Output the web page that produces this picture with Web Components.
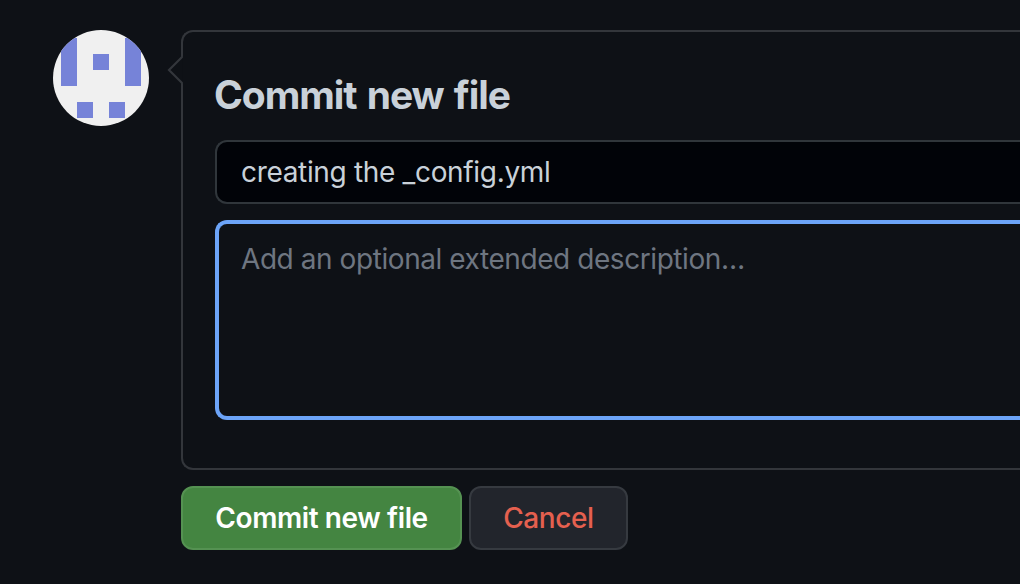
<!DOCTYPE html>
<html lang="en">
<head>
<meta charset="utf-8">
<title>Commit new file</title>
<style>
html,body{margin:0;height:100%;overflow:hidden;background:#0e1116}
body{font-family:Inter,"Liberation Sans",sans-serif;color:#c9d1d9}
</style>
</head>
<body>
<commit-form></commit-form>
<script>
const define = (name, html) => customElements.define(name, class extends HTMLElement {
  constructor() {
    super();
    this.attachShadow({mode: 'open'}).innerHTML = html;
  }
});

define('user-avatar', `<style>
:host{display:block;width:96px;height:96px;border-radius:50%;overflow:hidden;background:#f0f0f0;flex:none}
svg{display:block}
</style>
<svg width="96" height="96" viewBox="0 0 96 96" fill="#7683d8"><path d="M8 8h16v48H8zM72 8h16v48H72zM40 24h16v16H40zM24 72h16v16H24zM56 72h16v16H56z"/></svg>`);

define('speech-card', `<style>
:host{display:block;position:relative;box-sizing:border-box;height:440px;border:2px solid #33363b;border-right:0;border-radius:12px 0 0 12px;padding:32px 0 32px 32px}
svg{position:absolute;left:-16px;top:22px}
</style>
<svg width="18" height="32" viewBox="0 0 18 32"><path d="M14 3h2v26h-2z" fill="#0e1116"/><path d="M15.3 2.7L2 16L15.3 29.3" fill="#0e1116" stroke="#33363b" stroke-width="2.2"/></svg>
<slot></slot>`);

define('form-title', `<style>
:host{display:block}
h3{margin:0 0 0 -1px;height:76px;padding-top:6px;box-sizing:border-box;font-size:39px;line-height:50px;font-weight:700;letter-spacing:-1.05px;word-spacing:2px;white-space:nowrap}
</style><h3><slot></slot></h3>`);

define('summary-field', `<style>
:host{display:block;box-sizing:border-box;height:64px;border:2px solid #30363b;border-right:0;border-radius:12px 0 0 12px;background:#010308;padding:0 24px;font-size:28px;line-height:60px;letter-spacing:-.33px;white-space:nowrap}
</style><slot></slot>`);

define('description-field', `<style>
:host{display:block;box-sizing:border-box;height:200px;margin-top:16px;border:4px solid #6ca4f8;border-right:0;border-radius:12px 0 0 12px;padding:14px 22px;font-size:28px;line-height:42px;letter-spacing:-.43px;color:#6e7681;white-space:nowrap}
</style><slot></slot>`);

define('action-button', `<style>
:host{display:block;box-sizing:border-box;width:159px;height:64px;border:2px solid #363a40;border-radius:12px;background:#22252c;color:#e5604f;font-size:28px;line-height:60px;font-weight:550;letter-spacing:-.4px;text-align:center;white-space:nowrap}
:host([primary]){width:281px;background:#448541;border-color:#559252;color:#fff;font-weight:600;letter-spacing:-.4px}
</style><slot></slot>`);

define('commit-form', `<style>
:host{display:flex;gap:32px;padding:30px 0 0 53px}
main{flex:1;min-width:0}
footer{display:flex;gap:7px;margin-top:16px}
</style>
<user-avatar></user-avatar>
<main>
<speech-card>
<form-title>Commit new file</form-title>
<summary-field>creating the _config.yml</summary-field>
<description-field>Add an optional extended description…</description-field>
</speech-card>
<footer><action-button primary>Commit new file</action-button><action-button>Cancel</action-button></footer>
</main>`);
</script>
</body>
</html>
